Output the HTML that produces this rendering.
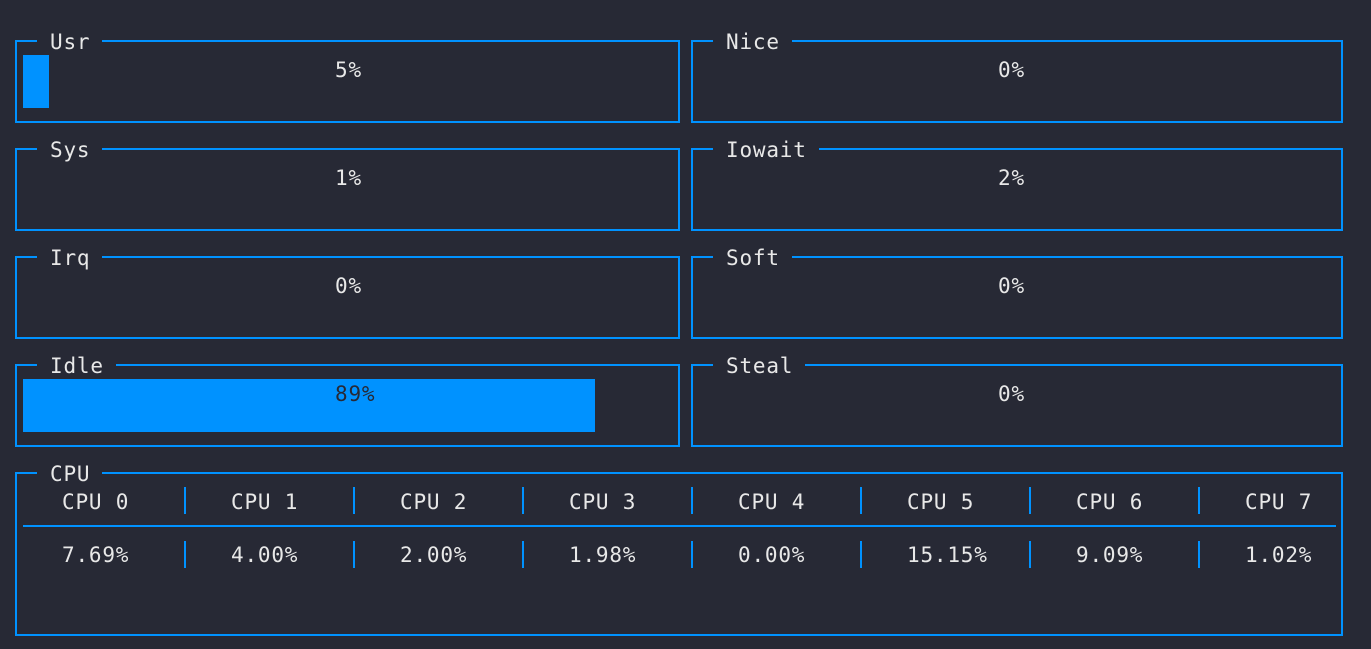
<!DOCTYPE html>
<html><head><style>
html,body{margin:0;padding:0;}
body{width:1371px;height:649px;background:#272935;position:relative;overflow:hidden;font-family:"DejaVu Sans Mono","Liberation Mono",monospace;font-size:21px;letter-spacing:0.8px;color:#e8e8e8;}
.p{position:absolute;border:2px solid #0092ff;box-sizing:border-box;}
.t{position:absolute;top:-13px;left:20px;background:#272935;padding:0 12px 0 13px;line-height:26px;white-space:pre;}
.v{position:absolute;line-height:26px;white-space:pre;}
.bar{position:absolute;background:#0092ff;}
.vs{position:absolute;width:2px;background:#0092ff;}
.hl{position:absolute;height:2px;background:#0092ff;}
</style></head><body>
<div class="p" style="left:15px;top:40px;width:665px;height:83px"><div class="t">Usr</div></div>
<div class="bar" style="left:23px;top:55px;width:26px;height:53px"></div>
<div class="v" style="left:335px;top:57px">5%</div>
<div class="p" style="left:691px;top:40px;width:652px;height:83px"><div class="t">Nice</div></div>
<div class="v" style="left:998px;top:57px">0%</div>

<div class="p" style="left:15px;top:148px;width:665px;height:83px"><div class="t">Sys</div></div>
<div class="v" style="left:335px;top:165px">1%</div>
<div class="p" style="left:691px;top:148px;width:652px;height:83px"><div class="t">Iowait</div></div>
<div class="v" style="left:998px;top:165px">2%</div>

<div class="p" style="left:15px;top:256px;width:665px;height:83px"><div class="t">Irq</div></div>
<div class="v" style="left:335px;top:273px">0%</div>
<div class="p" style="left:691px;top:256px;width:652px;height:83px"><div class="t">Soft</div></div>
<div class="v" style="left:998px;top:273px">0%</div>

<div class="p" style="left:15px;top:364px;width:665px;height:83px"><div class="t">Idle</div></div>
<div class="bar" style="left:23px;top:379px;width:572px;height:53px"></div>
<div class="v" style="left:335px;top:381px;color:#272935">89%</div>
<div class="p" style="left:691px;top:364px;width:652px;height:83px"><div class="t">Steal</div></div>
<div class="v" style="left:998px;top:381px">0%</div>

<div class="p" style="left:15px;top:472px;width:1328px;height:164px"><div class="t">CPU</div></div>
<div class="hl" style="left:23px;top:525px;width:1313px"></div>

<div class="v" style="left:62px;top:489px">CPU 0</div>
<div class="v" style="left:231px;top:489px">CPU 1</div>
<div class="v" style="left:400px;top:489px">CPU 2</div>
<div class="v" style="left:569px;top:489px">CPU 3</div>
<div class="v" style="left:738px;top:489px">CPU 4</div>
<div class="v" style="left:907px;top:489px">CPU 5</div>
<div class="v" style="left:1076px;top:489px">CPU 6</div>
<div class="v" style="left:1245px;top:489px">CPU 7</div>

<div class="v" style="left:62px;top:542px">7.69%</div>
<div class="v" style="left:231px;top:542px">4.00%</div>
<div class="v" style="left:400px;top:542px">2.00%</div>
<div class="v" style="left:569px;top:542px">1.98%</div>
<div class="v" style="left:738px;top:542px">0.00%</div>
<div class="v" style="left:907px;top:542px">15.15%</div>
<div class="v" style="left:1076px;top:542px">9.09%</div>
<div class="v" style="left:1245px;top:542px">1.02%</div>

<div class="vs" style="left:184px;top:487px;height:27px"></div>
<div class="vs" style="left:353px;top:487px;height:27px"></div>
<div class="vs" style="left:522px;top:487px;height:27px"></div>
<div class="vs" style="left:691px;top:487px;height:27px"></div>
<div class="vs" style="left:860px;top:487px;height:27px"></div>
<div class="vs" style="left:1029px;top:487px;height:27px"></div>
<div class="vs" style="left:1198px;top:487px;height:27px"></div>

<div class="vs" style="left:184px;top:541px;height:27px"></div>
<div class="vs" style="left:353px;top:541px;height:27px"></div>
<div class="vs" style="left:522px;top:541px;height:27px"></div>
<div class="vs" style="left:691px;top:541px;height:27px"></div>
<div class="vs" style="left:860px;top:541px;height:27px"></div>
<div class="vs" style="left:1029px;top:541px;height:27px"></div>
<div class="vs" style="left:1198px;top:541px;height:27px"></div>
</body></html>
